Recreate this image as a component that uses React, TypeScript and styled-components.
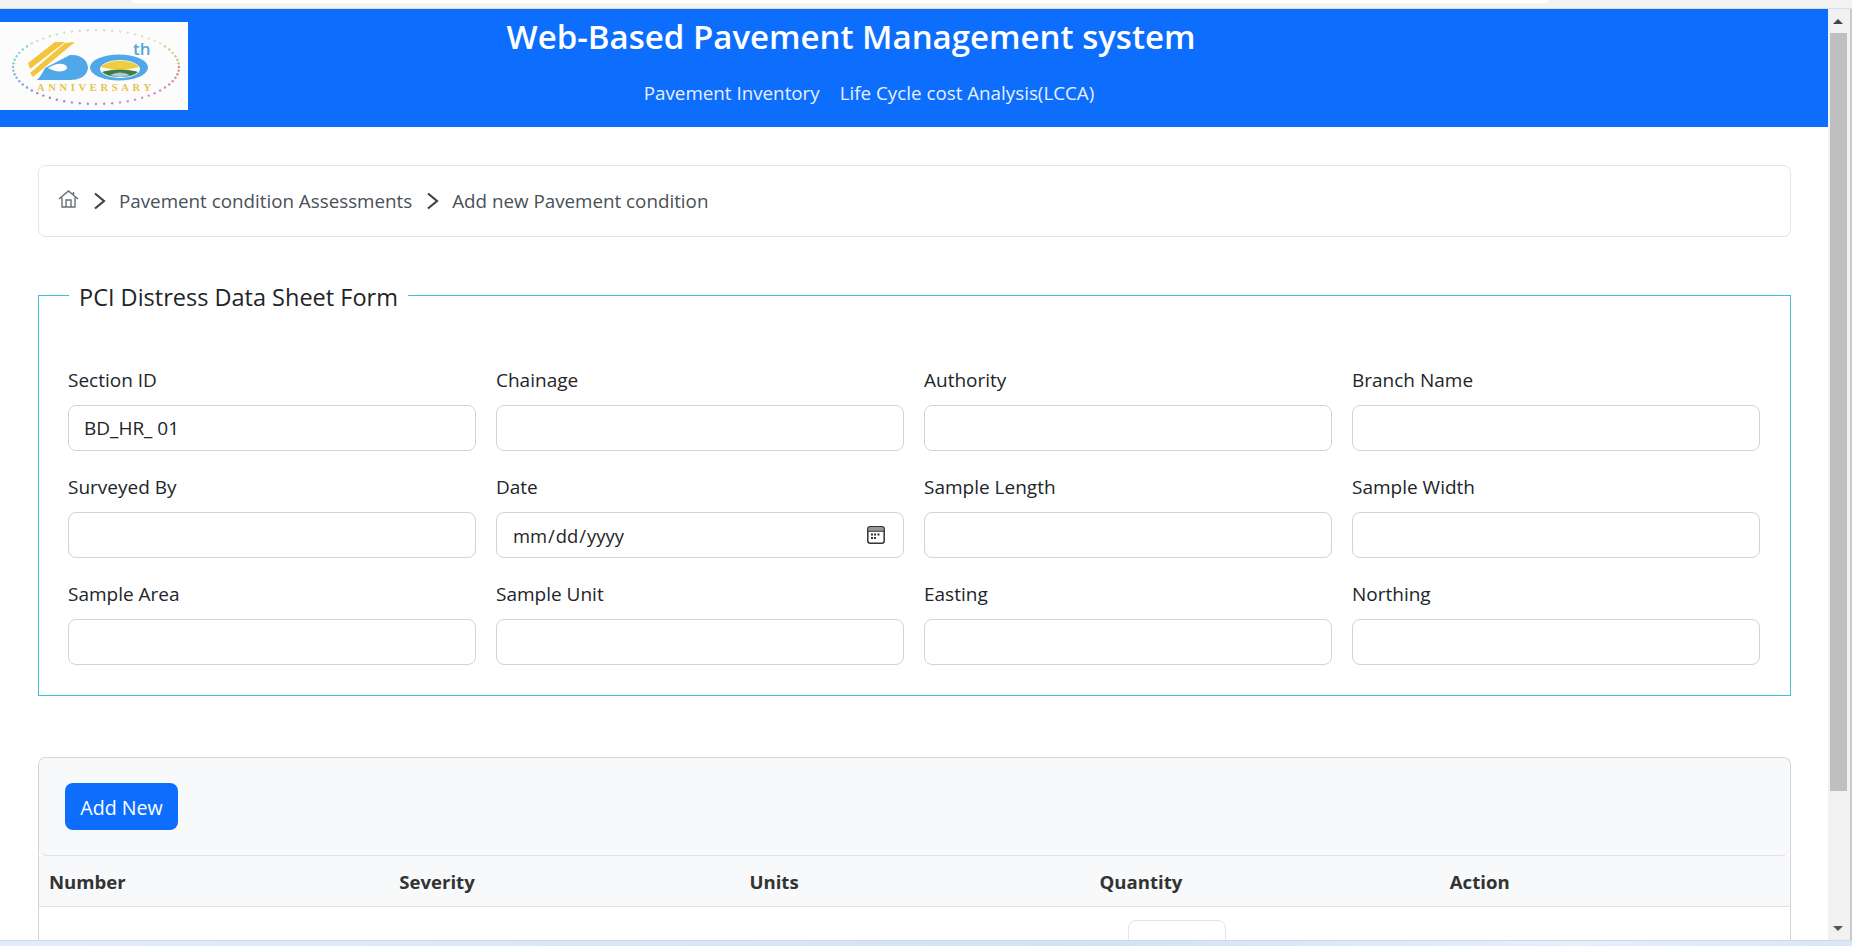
import React from 'react';
import styled, { createGlobalStyle } from 'styled-components';

const FONT = `"Open Sans", "Noto Sans", "Liberation Sans", sans-serif`;

const GlobalStyle = createGlobalStyle`
  html, body {
    margin: 0;
    height: 946px;
    overflow: hidden;
    background: #fff;
    font-family: ${FONT};
    color: #212529;
  }
  * { box-sizing: border-box; }
`;

const Screen = styled.div`
  width: 1852px;
  height: 946px;
  display: flex;
  flex-direction: column;
`;

const BrowserTop = styled.div`
  height: 9px;
  flex: none;
  background: #f3f3f3;
  border-bottom: 1px solid #cfe0f5;
  padding-left: 132px;
`;

const AddressBar = styled.div`
  width: 1416px;
  height: 3px;
  background: #fff;
  border-radius: 0 0 6px 6px;
`;

const Viewport = styled.div`
  flex: 1;
  min-height: 0;
  display: flex;
`;

const Main = styled.main`
  width: 1828px;
  flex: none;
  overflow: hidden;
`;

const Scrollbar = styled.div`
  flex: 1;
  display: flex;
  flex-direction: column;
  align-items: center;
  padding-right: 2px;
  background: #f1f1f1;
  border-right: 2px solid #c9c9c9;
`;

const ArrowButton = styled.div`
  height: 24px;
  width: 100%;
  flex: none;
  display: flex;
  align-items: center;
  justify-content: center;
`;

const Arrow = styled.span<{ $down?: boolean }>`
  width: 0;
  height: 0;
  border-left: 5px solid transparent;
  border-right: 5px solid transparent;
  ${p => (p.$down ? 'border-top: 5px solid #555;' : 'border-bottom: 5px solid #444;')}
`;

const Thumb = styled.div`
  width: 17px;
  height: 758px;
  flex: none;
  background: #bfbfbf;
`;

const Track = styled.div`
  flex: 1;
`;

const BrowserBottom = styled.div`
  height: 6px;
  flex: none;
  background: linear-gradient(90deg, #e3edf9, #d3e2f6 60%, #e6f0fb 85%, #d9e6f7);
  border-top: 1px solid #cdd9e8;
`;

const Header = styled.header`
  height: 118px;
  background: #0d6efd;
  display: flex;
  align-items: flex-start;
  color: #fff;
`;

const LogoBox = styled.div`
  width: 188px;
  height: 88px;
  margin-top: 13px;
  flex: none;
  background: #fdfcfc;
`;

const TitleBlock = styled.div`
  width: 1326px;
  text-align: center;
`;

const Title = styled.h1`
  margin: 5px 0 0;
  font-size: 33px;
  line-height: 46px;
  font-weight: 600;
`;

const Nav = styled.nav`
  margin-top: 20px;
  padding-left: 36px;
  display: flex;
  justify-content: center;
  gap: 20px;
`;

const NavLink = styled.a`
  font-size: 18.8px;
  line-height: 27px;
  color: #e8f0ff;
`;

const Content = styled.div`
  padding: 38px 37px 0 38px;
`;

const Breadcrumb = styled.div`
  height: 72px;
  border: 1px solid #e3e5e8;
  border-radius: 8px;
  display: flex;
  align-items: center;
  padding-left: 19px;
  color: #495057;
  font-size: 18.8px;
`;

const HomeIcon = styled.svg`
  width: 21px;
  height: 18px;
  margin-top: -4px;
  color: #66717a;
`;

const ChevronIcon = styled.svg`
  width: 13px;
  height: 18px;
  margin: 0 13px 0 14px;
  color: #3d444a;
`;

const FormSet = styled.fieldset`
  margin: 38px 0 0;
  padding: 52px 29px 30px;
  border: 1px solid #3cc3cf;
  display: grid;
  grid-template-columns: repeat(4, 408px);
  column-gap: 20px;
  row-gap: 23px;
`;

const Legend = styled.legend`
  margin-left: 1px;
  padding: 4px 10px 0;
  font-size: 23.5px;
  line-height: 36px;
`;

const Field = styled.div`
  display: flex;
  flex-direction: column;
`;

const Label = styled.label`
  font-size: 19px;
  line-height: 27px;
  margin-bottom: 11px;
`;

const InputWrap = styled.div`
  position: relative;
`;

const Input = styled.input`
  display: block;
  width: 100%;
  height: 46px;
  padding: 0 15px;
  border: 1px solid #ced4da;
  border-radius: 8px;
  background: #fff;
  font-family: ${FONT};
  font-size: 19px;
  color: #212529;

  &[type='date'] {
    font-size: 18.4px;
  }

  &::-webkit-calendar-picker-indicator {
    opacity: 0;
  }
`;

const CalendarIcon = styled.svg`
  position: absolute;
  right: 19px;
  top: 14px;
  width: 18px;
  height: 18px;
  pointer-events: none;
`;

const TableCard = styled.section`
  margin-top: 61px;
  border: 1px solid #d2d4d6;
  border-bottom: 0;
  border-radius: 8px 8px 0 0;
`;

const CardHeader = styled.div`
  height: 98px;
  background: #f8f9fa;
  border-bottom: 1px solid #e1e3e5;
  border-radius: 8px;
  padding: 25px 26px 0;
`;

const AddButton = styled.button`
  display: block;
  width: 113px;
  height: 47px;
  padding: 2px 0 0;
  border: 0;
  border-radius: 8px;
  background: #0d6efd;
  color: #fff;
  font-family: ${FONT};
  font-size: 19.6px;
`;

const Table = styled.table`
  width: 100%;
  table-layout: fixed;
  border-collapse: collapse;
`;

const Th = styled.th`
  height: 50px;
  padding: 2px 10px 0;
  background: #f8f9fa;
  border-bottom: 1px solid #dee2e6;
  text-align: left;
  font-size: 18.6px;
  font-weight: 700;
  color: #333;
`;

const Td = styled.td`
  padding: 13px 10px;
  vertical-align: top;
`;

const QuantityInput = styled(Input)`
  width: 98px;
  margin-left: 28px;
  border-color: #e1e4e8;
`;

const Chevron = () => (
  <ChevronIcon viewBox="0 0 13 18">
    <path d="M2 1.5 L11 9 L2 16.5" fill="none" stroke="currentColor" strokeWidth="2.2" />
  </ChevronIcon>
);

const Home = () => (
  <HomeIcon viewBox="0 0 21 18">
    <path
      d="M1 9 L10.5 1 L20 9 M15.5 2 V5 M4 7.5 V17 H17 V7.5 M8 17 V10 H13 V17"
      fill="none"
      stroke="currentColor"
      strokeWidth="1.4"
    />
  </HomeIcon>
);

const Calendar = () => (
  <CalendarIcon viewBox="0 0 18 18">
    <rect x="0.8" y="0.8" width="16.4" height="16.4" rx="2.5" fill="#fff" stroke="#333" strokeWidth="1.5" />
    <path d="M1 5 H17" stroke="#333" strokeWidth="1.5" />
    <path d="M1.5 1.5 H16.5 V4.5 H1.5 Z" fill="#999" />
    <path d="M7 7.5 h2 v2 h-2 z M10.5 7.5 h2 v2 h-2 z M4 7.5 h2 v2 h-2 z M4 11 h2 v2 h-2 z M7 11 h2 v2 h-2 z" fill="#333" />
  </CalendarIcon>
);

const Logo = () => {
  const dots = Array.from({ length: 64 }, (_, i) => {
    const a = (i / 64) * Math.PI * 2;
    const hue = 360 - (i / 64) * 330;
    const pale = i > 38 && i < 58;
    return (
      <circle
        key={i}
        cx={96 + 83 * Math.cos(a)}
        cy={45 + 37 * Math.sin(a)}
        r={1.2}
        fill={`hsl(${hue}, 45%, ${pale ? 82 : 68}%)`}
      />
    );
  });
  return (
    <svg width="188" height="88" viewBox="0 0 188 88">
      {dots}
      <path d="M28 41 L55 20 L65 20 L30 47 Z" fill="#f2c53d" />
      <path d="M30 51 L65 21 L75 20 L33 55 Z" fill="#f2c53d" />
      <path
        d="M45 46 L70 33 C84 32 88 41 88 46 C87 55 78 58 70 58 L37 58 C41 54 43 50 45 46 Z"
        fill="#4fa8e8"
      />
      <path d="M48 46 C56 41 64 40 67 45 C68 49 58 52 48 46 Z" fill="#fdfcfc" />
      <ellipse cx="119" cy="45.5" rx="29" ry="13" fill="#4fa8e8" />
      <ellipse cx="120" cy="47" rx="20" ry="9" fill="#fdf9e8" />
      <path d="M101 45 A20 9 0 0 1 139 45 L120 49 Z" fill="#eecb40" />
      <path d="M102 50 C110 47 130 47 138 50 A20 9 0 0 1 102 50 Z" fill="#3f7d45" />
      <path d="M110 53 Q120 48 130 53 Q120 57 110 53 Z" fill="#a9c9dc" />
      <text x="133" y="33" fontFamily="Open Sans, sans-serif" fontSize="17" fontWeight="600" fill="#58a6dc">
        th
      </text>
      <text x="37" y="69" fontFamily="Liberation Serif, serif" fontSize="10.5" fontWeight="700" textLength="114" fill="#e3c44b">
        ANNIVERSARY
      </text>
    </svg>
  );
};

const topFields = [
  { label: 'Section ID', value: 'BD_HR_ 01' },
  { label: 'Chainage' },
  { label: 'Authority' },
  { label: 'Branch Name' },
  { label: 'Surveyed By' },
  { label: 'Date', type: 'date' },
  { label: 'Sample Length' },
  { label: 'Sample Width' },
  { label: 'Sample Area' },
  { label: 'Sample Unit' },
  { label: 'Easting' },
  { label: 'Northing' },
];

const columns = ['Number', 'Severity', 'Units', 'Quantity', 'Action'];

const App: React.FC = () => (
  <>
    <GlobalStyle />
    <Screen>
      <BrowserTop>
        <AddressBar />
      </BrowserTop>
      <Viewport>
        <Main>
          <Header>
            <LogoBox>
              <Logo />
            </LogoBox>
            <TitleBlock>
              <Title>Web-Based Pavement Management system</Title>
              <Nav>
                <NavLink>Pavement Inventory</NavLink>
                <NavLink>Life Cycle cost Analysis(LCCA)</NavLink>
              </Nav>
            </TitleBlock>
          </Header>
          <Content>
            <Breadcrumb>
              <Home />
              <Chevron />
              <span>Pavement condition Assessments</span>
              <Chevron />
              <span>Add new Pavement condition</span>
            </Breadcrumb>
            <FormSet>
              <Legend>PCI Distress Data Sheet Form</Legend>
              {topFields.map(f => (
                <Field key={f.label}>
                  <Label>{f.label}</Label>
                  <InputWrap>
                    <Input type={f.type || 'text'} defaultValue={f.value} />
                    {f.type === 'date' && <Calendar />}
                  </InputWrap>
                </Field>
              ))}
            </FormSet>
            <TableCard>
              <CardHeader>
                <AddButton>Add New</AddButton>
              </CardHeader>
              <Table>
                <thead>
                  <tr>
                    {columns.map(c => (
                      <Th key={c}>{c}</Th>
                    ))}
                  </tr>
                </thead>
                <tbody>
                  <tr>
                    <Td />
                    <Td />
                    <Td />
                    <Td>
                      <QuantityInput />
                    </Td>
                    <Td />
                  </tr>
                </tbody>
              </Table>
            </TableCard>
          </Content>
        </Main>
        <Scrollbar>
          <ArrowButton>
            <Arrow />
          </ArrowButton>
          <Thumb />
          <Track />
          <ArrowButton>
            <Arrow $down />
          </ArrowButton>
        </Scrollbar>
      </Viewport>
      <BrowserBottom />
    </Screen>
  </>
);

export default App;
